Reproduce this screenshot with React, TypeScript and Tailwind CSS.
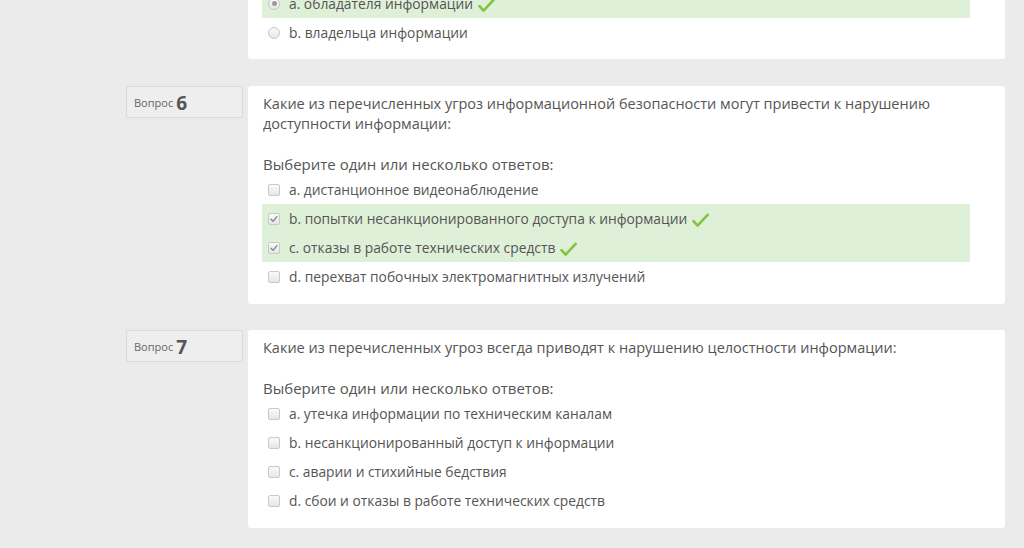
import React from "react";

const font = { fontFamily: '"Open Sans", "Noto Sans", sans-serif' };

function Tick() {
  return (
    <svg width="17" height="15" viewBox="0 0 17 15" className="ml-[5px] mt-[3px] shrink-0">
      <path d="M1.5 8.2 L5.6 12.6 L15.6 1.8" fill="none" stroke="#84c340" strokeWidth="2.6" strokeLinecap="round" strokeLinejoin="round" />
    </svg>
  );
}

function Checkbox({ checked }: { checked?: boolean }) {
  return (
    <span className="w-[12px] h-[12px] rounded-[2px] border border-[#c9c9c9] bg-gradient-to-b from-[#fafafa] to-[#e6e6e6] flex items-center justify-center shrink-0">
      {checked && (
        <svg width="8" height="8" viewBox="0 0 8 8">
          <path d="M1 4.2 L3.1 6.3 L7 1.6" fill="none" stroke="#8a8a8a" strokeWidth="1.4" strokeLinecap="round" strokeLinejoin="round" />
        </svg>
      )}
    </span>
  );
}

function Radio({ checked }: { checked?: boolean }) {
  return (
    <span className="w-[12px] h-[12px] rounded-full border border-[#c9c9c9] bg-gradient-to-b from-[#fafafa] to-[#e6e6e6] flex items-center justify-center shrink-0">
      {checked && <span className="w-[5px] h-[5px] rounded-full bg-[#9a9a9a]" />}
    </span>
  );
}

type Opt = { text: string; correct?: boolean };

function Option({ o, radio }: { o: Opt; radio?: boolean }) {
  return (
    <div className={`h-[29px] flex items-center pl-[6px] ${o.correct ? "bg-[#dff0d8]" : ""}`}>
      {radio ? <Radio checked={o.correct} /> : <Checkbox checked={o.correct} />}
      <span className="ml-[9px] text-[13.8px] text-[#555555] leading-[20px]">{o.text}</span>
      {o.correct && <Tick />}
    </div>
  );
}

function Question({ num, text, options }: { num: number; text: React.ReactNode; options: Opt[] }) {
  return (
    <div className="flex">
      <div className="w-[117px] h-[32px] shrink-0 bg-[#eeeeee] border border-[#dadada] rounded-[2px] flex items-center pl-[7px] pt-[3px] mr-[5px]">
        <span className="text-[11px] text-[#666666]">Вопрос</span>
        <span className="text-[19px] font-bold text-[#555555] ml-[3px] leading-none">{num}</span>
      </div>
      <div className="w-[757px] bg-white rounded-[3px] pt-[8px] pb-[13px] pl-[14px] pr-[35px]">
        <div className="pl-[1px] text-[14.5px] leading-[20px] text-[#555555]">{text}</div>
        <div className="pl-[1px] mt-[20px] text-[15px] leading-[20px] text-[#555555]">Выберите один или несколько ответов:</div>
        <div className="mt-[1px]">
          {options.map((o, i) => (
            <Option key={i} o={o} />
          ))}
        </div>
      </div>
    </div>
  );
}

export default function App() {
  return (
    <div style={font} className="w-[1024px] h-[548px] bg-[#ebebeb] overflow-hidden">
      <div className="pl-[126px] flex flex-col">
        <div className="flex -mt-[11px]">
          <div className="w-[122px] shrink-0" />
          <div className="w-[757px] bg-white rounded-b-[3px] pb-[12px] pl-[14px] pr-[35px]">
            <Option radio o={{ text: "a. обладателя информации", correct: true }} />
            <div className="h-[29px] flex items-center pl-[6px]">
              <Radio />
              <span className="ml-[9px] text-[13.8px] text-[#555555] leading-[20px]">b. владельца информации</span>
            </div>
          </div>
        </div>
        <div className="mt-[27px]">
          <Question
            num={6}
            text={
              <>
                Какие из перечисленных угроз информационной безопасности могут привести к нарушению
                <br />
                доступности информации:
              </>
            }
            options={[
              { text: "a. дистанционное видеонаблюдение" },
              { text: "b. попытки несанкционированного доступа к информации", correct: true },
              { text: "c. отказы в работе технических средств", correct: true },
              { text: "d. перехват побочных электромагнитных излучений" },
            ]}
          />
        </div>
        <div className="mt-[26px]">
          <Question
            num={7}
            text="Какие из перечисленных угроз всегда приводят к нарушению целостности информации:"
            options={[
              { text: "a. утечка информации по техническим каналам" },
              { text: "b. несанкционированный доступ к информации" },
              { text: "c. аварии и стихийные бедствия" },
              { text: "d. сбои и отказы в работе технических средств" },
            ]}
          />
        </div>
      </div>
    </div>
  );
}
